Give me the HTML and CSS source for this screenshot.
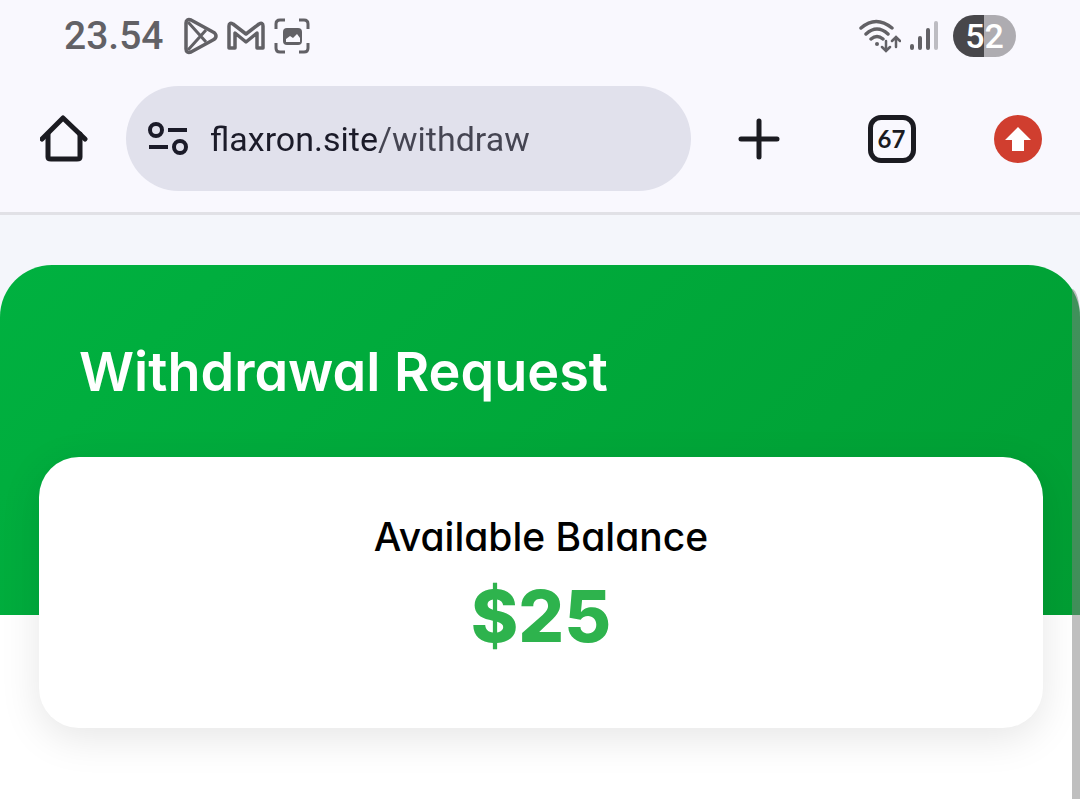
FILE: index.html
```html
<!DOCTYPE html>
<html lang="en">
<head>
  <meta charset="UTF-8">
  <meta name="viewport" content="width=device-width, initial-scale=1.0">
  <title>Withdrawal Request</title>
  <link rel="stylesheet" href="styles.css">
</head>
<body>

<!-- Phone status bar -->
<div class="status">
  <span class="clock">23.54</span>
  <div class="notifications">
    <svg width="34" height="38" viewBox="0 0 34 38" fill="none" stroke="#626166" stroke-width="3.500" stroke-linejoin="round">
      <path d="M2 6v26c0 3 2 4 5 3l22-12c4-2 4-6 0-8L7 3c-3-1-5 0-5 3z"/>
      <path d="M4 5l18 20M4 33l18-20" stroke-width="3"/>
    </svg>
    <svg width="38" height="30" viewBox="0 0 38 30" fill="none" stroke="#626166" stroke-width="3.500" stroke-linejoin="round">
      <path d="M2 27V5q0-4 4-2l13 10L32 3q4-2 4 2v22h-6V12l-11 9L8 12v15z"/>
    </svg>
    <svg width="36" height="36" viewBox="0 0 36 36">
      <path d="M2 11V6q0-4 4-4h5M25 2h5q4 0 4 4v5M34 25v5q0 4-4 4h-5M11 34H6q-4 0-4-4v-5" fill="none" stroke="#626166" stroke-width="3"/>
      <rect x="9" y="10" width="19" height="17" rx="4" fill="#626166"/>
      <path d="M12 24v-3l4-3 3 2 4-4 3 4v4z" fill="#f9f8fe"/>
    </svg>
  </div>
  <div class="signals">
    <svg width="42" height="34" viewBox="0 0 42 34" fill="none" stroke="#626166" stroke-width="3.500" stroke-linecap="round">
      <path d="M2 9Q17-4 33 9M7 15q11-10 22 0M12 20q6-5 12 0"/>
      <circle cx="18" cy="25" r="2" fill="#626166" stroke="none"/>
      <path d="M27 22v9M23 28l4 4 4-4M37 28v-9M33 22l4-4 4 4" stroke-width="2.500"/>
    </svg>
    <svg width="28" height="30" viewBox="0 0 28 30" stroke="#626166" stroke-width="4" stroke-linecap="round">
      <path d="M2 25v2M10 17v10M18 9v18"/>
      <path d="M26 2v25" stroke="#bdbcc2"/>
    </svg>
    <span class="battery">52</span>
  </div>
</div>

<!-- Browser toolbar -->
<div class="toolbar">
  <a class="tool" href="#" aria-label="Home">
    <svg width="48" height="48" viewBox="0 0 48 48" fill="none" stroke="#1b1b21" stroke-width="5" stroke-linejoin="round" stroke-linecap="round">
      <path d="M2 24L23 3l22 21"/>
      <path d="M8 19v23q0 2 3 2h26q3 0 3-2V19"/>
    </svg>
  </a>
  <div class="address">
    <svg width="40" height="34" viewBox="0 0 40 34" fill="none" stroke="#1b1b29" stroke-width="4">
      <circle cx="8" cy="8" r="6"/><path d="M20 8h19"/>
      <path d="M1 25h19"/><circle cx="32" cy="25" r="6"/>
    </svg>
    <input class="url" type="text" aria-label="Address" value="flaxron.site/withdraw">
  </div>
  <div class="actions">
    <button class="tool" aria-label="New tab">
      <svg width="44" height="44" viewBox="0 0 44 44" stroke="#1b1b21" stroke-width="5" stroke-linecap="round">
        <path d="M22 4v36M4 22h36"/>
      </svg>
    </button>
    <button class="tool tabs" aria-label="Tabs">67</button>
    <button class="tool" aria-label="Update browser">
      <svg width="48" height="48" viewBox="0 0 48 48">
        <circle cx="24" cy="24" r="24" fill="#d03e2f"/>
        <path d="M24 12l13 13h-7v11H18V25h-7z" fill="#fff"/>
      </svg>
    </button>
  </div>
</div>

<!-- Main content -->
<div class="page">
  <div class="hero">
    <h1>Withdrawal Request</h1>
  </div>
  <div class="card">
    <h2>Available Balance</h2>
    <p class="amount">$25</p>
  </div>
  <div class="scroll_thumb"></div>
</div>

</body>
</html>
```
FILE: styles.css
```css
* {
  box-sizing: border-box;
}
body {
  margin: 0;
  min-height: 100vh;
  display: flex;
  flex-direction: column;
  background-color: #f9f8fe;
  font-family: Inter, "Open Sans", sans-serif;
}
svg {
  display: block;
  flex: none;
}

.status {
  display: flex;
  align-items: center;
  height: 72px;
  padding: 0 64px;
  color: #626166;
  font-family: Roboto, sans-serif;
}
.clock {
  font-size: 39px;
  font-weight: 500;
}
.notifications {
  display: flex;
  align-items: center;
  gap: 9px;
  margin-left: 20px;
}
.signals {
  display: flex;
  align-items: center;
  gap: 9px;
  margin-left: auto;
}
.battery {
  width: 63px;
  height: 42px;
  margin-left: 6px;
  border-radius: 21px;
  background: linear-gradient(90deg, #48474b 50%, #aeacb1 50%);
  color: white;
  font-size: 34px;
  font-weight: 500;
  line-height: 42px;
  text-align: center;
}

.toolbar {
  display: flex;
  align-items: center;
  padding: 14px 38px 21px 40px;
  border-bottom: 3px solid #e1e1e6;
}
.tool {
  display: block;
  padding: 0;
  border: 0;
  background: none;
}
.address {
  flex: 1;
  display: flex;
  align-items: center;
  gap: 22px;
  height: 105px;
  margin: 0 46px 0 38px;
  padding: 0 22px;
  border-radius: 53px;
  background-color: #e1e1ec;
}
.url {
  flex: 1;
  min-width: 0;
  padding: 0;
  border: 0;
  outline: none;
  background: linear-gradient(90deg, #1b1b29 168px, #454552 168px);
  -webkit-background-clip: text;
  background-clip: text;
  color: transparent;
  font-family: Roboto, sans-serif;
  font-size: 34px;
}
.actions {
  display: flex;
  align-items: center;
  justify-content: space-between;
  width: 305px;
}
.tabs {
  width: 48px;
  height: 48px;
  margin-left: 8px;
  border: 5px solid #1b1b21;
  border-radius: 13px;
  color: #1b1b21;
  font-family: Lato, sans-serif;
  font-size: 24px;
  font-weight: 700;
}

.page {
  position: relative;
  flex: 1;
  padding-top: 50px;
  background: linear-gradient(#f4f6fb 200px, white 200px);
}
.hero {
  height: 350px;
  padding: 77px 79px;
  border-radius: 52px 52px 0 0;
  background: linear-gradient(135deg, #00b140, #009e33);
  color: white;
}
h1 {
  margin: 0;
  font-size: 54px;
  font-weight: 600;
  line-height: 60px;
  font-feature-settings: "cv11";
}
.card {
  position: relative;
  margin: -158px 37px 0 39px;
  padding: 52px 20px 72px;
  border-radius: 40px;
  background-color: white;
  box-shadow: 0 10px 40px rgba(0, 0, 0, 0.1);
  text-align: center;
}
h2 {
  margin: 0;
  color: black;
  font-size: 39px;
  font-weight: 500;
  line-height: 56px;
  font-feature-settings: "cv11";
}
.amount {
  margin: 11px 0 0;
  color: #2eb34d;
  font-size: 72px;
  font-weight: 800;
  line-height: 80px;
}
.scroll_thumb {
  position: absolute;
  top: 74px;
  right: 0;
  bottom: 0;
  width: 8px;
  border-radius: 0 8px 0 0 / 0 28px 0 0;
  background-color: rgba(128, 128, 128, 0.5);
}

@media (max-width: 700px) {
  .address {
    margin: 0 12px;
  }
  .actions {
    width: 180px;
  }
  h1 {
    font-size: 36px;
  }
}
```
